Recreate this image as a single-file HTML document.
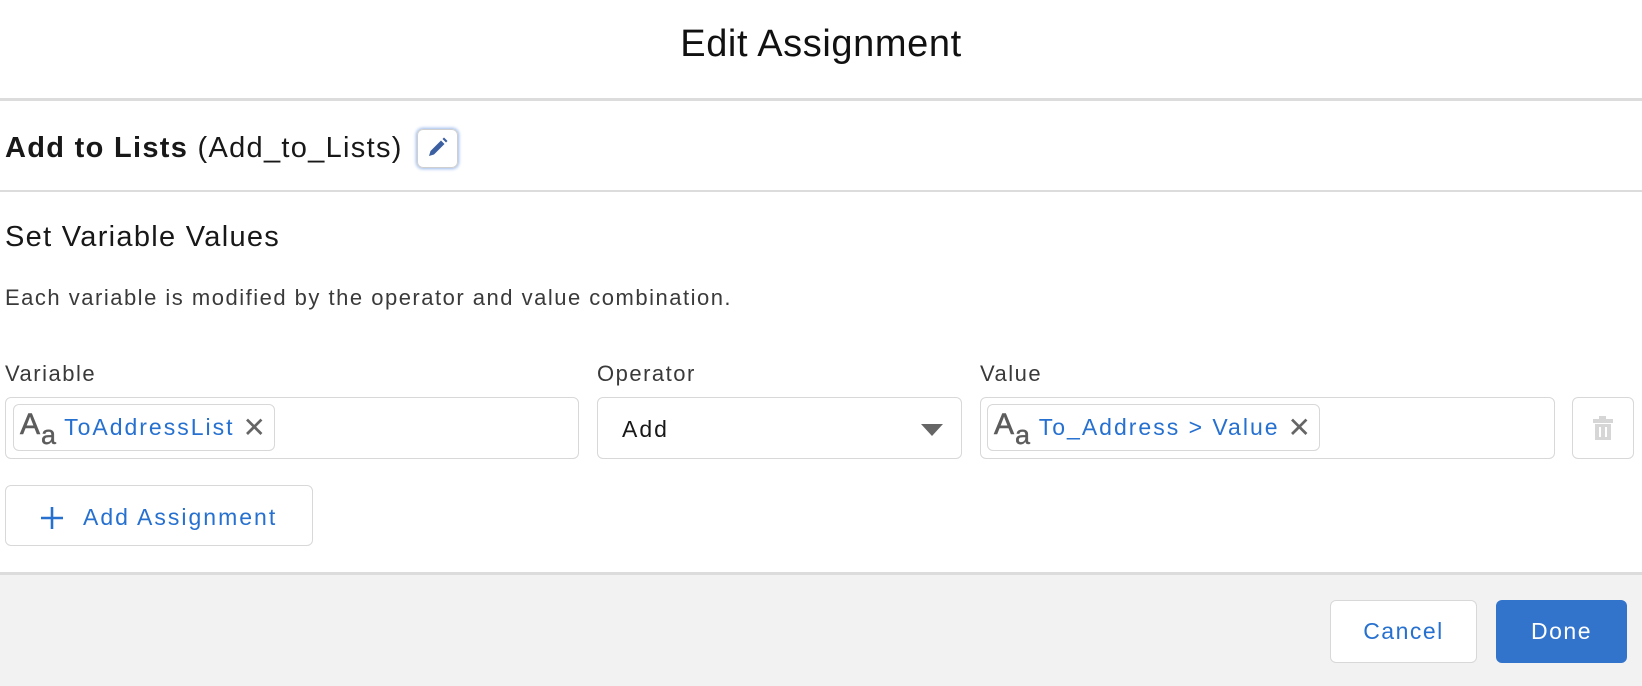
<!DOCTYPE html>
<html><head><style>
*{box-sizing:border-box;margin:0;padding:0}
body{width:1642px;height:686px;background:#fff;font-family:"Liberation Sans",sans-serif;color:#181818;position:relative;overflow:hidden}
.a{position:absolute;white-space:nowrap}
.blue{color:#2670d0}
.box{position:absolute;border:1.5px solid #d8d8d8;border-radius:6px;background:#fff}
.pill{position:absolute;border:1.5px solid #d8d8d8;border-radius:6px;height:47px;top:404px;display:flex;align-items:center;font-size:23px;letter-spacing:2px;white-space:nowrap}
.aa{position:relative;width:44px;height:40px;margin:0 6px 0 4px;color:#5c5c5c;letter-spacing:0}
.aa .A{position:absolute;left:2px;top:0;font-size:30px;-webkit-text-stroke:0.6px #5c5c5c}
.aa .s{position:absolute;left:23px;top:12px;font-size:27px;-webkit-text-stroke:0.4px #5c5c5c}
.x{color:#666;font-size:28px;margin:0 8px 0 8px;line-height:1;letter-spacing:0}
.lbl{font-size:22px;letter-spacing:1.5px;color:#3a3a3a}
</style></head><body>
<div class="a" style="left:0;width:1642px;top:23px;text-align:center;font-size:38px;letter-spacing:0.6px;color:#111">Edit Assignment</div>
<div class="a" style="left:0;width:1642px;top:98px;height:3px;background:#dcdcdc"></div>
<div class="a" style="left:5px;top:132px;font-size:29px;letter-spacing:1.3px"><b>Add to Lists</b> (Add_to_Lists)</div>
<div class="a" style="left:417px;top:129px;width:41px;height:39px;border:1.5px solid #cfcfcf;border-radius:6px;box-shadow:0 0 3px 1px #9bb8ea">
<svg width="38" height="36" viewBox="0 0 38 36"><path d="M11 26 L12.5 21 L23 10.5 L26.5 14 L16 24.5 Z" fill="#3b5fa0"/><path d="M24.5 9 L26 7.5 L29.5 11 L28 12.5 Z" fill="#3b5fa0"/></svg></div>
<div class="a" style="left:0;width:1642px;top:190px;height:1.5px;background:#dcdcdc"></div>
<div class="a" style="left:5px;top:221px;font-size:29px;letter-spacing:1.3px">Set Variable Values</div>
<div class="a lbl" style="left:5px;top:285px">Each variable is modified by the operator and value combination.</div>
<div class="a lbl" style="left:5px;top:361px">Variable</div>
<div class="a lbl" style="left:597px;top:361px">Operator</div>
<div class="a lbl" style="left:980px;top:361px">Value</div>
<div class="box" style="left:5px;top:397px;width:574px;height:62px"></div>
<div class="pill" style="left:13px;width:262px"><span class="aa"><span class="A">A</span><span class="s">a</span></span><span class="blue">ToAddressList</span><span class="x">✕</span></div>
<div class="box" style="left:597px;top:397px;width:365px;height:62px"></div>
<div class="a" style="left:622px;top:416px;font-size:23px;letter-spacing:2px">Add</div>
<div class="a" style="left:921px;top:424px;width:0;height:0;border-left:11px solid transparent;border-right:11px solid transparent;border-top:12px solid #666"></div>
<div class="box" style="left:980px;top:397px;width:575px;height:62px"></div>
<div class="pill" style="left:987px;width:333px"><span class="aa"><span class="A">A</span><span class="s">a</span></span><span class="blue">To_Address &gt; Value</span><span class="x">✕</span></div>
<div class="box" style="left:1572px;top:397px;width:62px;height:62px"></div>
<svg class="a" style="left:1591px;top:414px" width="24" height="28" viewBox="0 0 24 28"><rect x="8" y="2" width="7" height="3" fill="#d6d6d6"/><rect x="2" y="5" width="20" height="4" fill="#d6d6d6"/><rect x="4" y="10" width="16" height="16" fill="#d6d6d6"/><rect x="8" y="13" width="2" height="10" fill="#fff"/><rect x="14" y="13" width="2" height="10" fill="#fff"/></svg>
<div class="box" style="left:5px;top:485px;width:308px;height:61px"></div>
<svg class="a" style="left:39px;top:505px" width="26" height="26" viewBox="0 0 26 26"><path d="M13 2V24M2 13H24" stroke="#2670d0" stroke-width="2.6"/></svg>
<div class="a blue" style="left:83px;top:504px;font-size:23px;letter-spacing:2px">Add Assignment</div>
<div class="a" style="left:0;width:1642px;top:572px;height:3px;background:#dcdcdc"></div>
<div class="a" style="left:0;width:1642px;top:575px;height:111px;background:#f3f2f2"></div>
<div class="box" style="left:1330px;top:600px;width:147px;height:63px;text-align:center;line-height:60px;font-size:23px;letter-spacing:1.5px;color:#2670d0">Cancel</div>
<div class="a" style="left:1496px;top:600px;width:131px;height:63px;background:#3274cc;border-radius:6px;text-align:center;line-height:63px;font-size:23px;letter-spacing:1.5px;color:#fff">Done</div>
</body></html>
